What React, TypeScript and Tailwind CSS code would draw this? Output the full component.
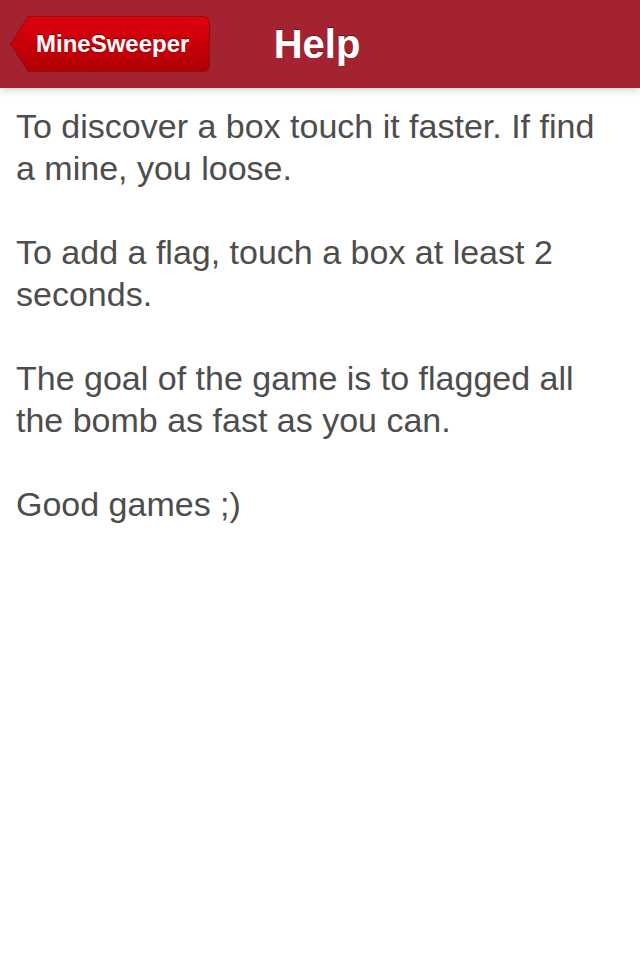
export default function App() {
  const paragraphs = [
    "To discover a box touch it faster. If find a mine, you loose.",
    "To add a flag, touch a box at least 2 seconds.",
    "The goal of the game is to flagged all the bomb as fast as you can.",
    "Good games ;)",
  ];

  return (
    <div className="min-h-screen bg-white font-['Liberation_Sans',Arial,sans-serif]">
      <header className="relative h-[88px] bg-[#a32331] grid grid-cols-[1fr_auto_1fr] items-center shadow-[0_2px_8px_rgba(0,0,0,0.18)]">
        <div className="pl-[10px]">
          <button className="relative w-[200px] h-[56px] flex items-center pl-[26px] text-white font-bold text-[24px] [text-shadow:0_-1px_0_rgba(0,0,0,0.45)]">
            <svg className="absolute inset-0" width="200" height="56" viewBox="0 0 200 56">
              <defs>
                <linearGradient id="btn" x1="0" y1="0" x2="0" y2="1">
                  <stop offset="0" stopColor="#e2000e" />
                  <stop offset="1" stopColor="#ae0004" />
                </linearGradient>
              </defs>
              <path
                d="M0.5 28 L18 0.5 H193 Q199.5 0.5 199.5 7 V49 Q199.5 55.5 193 55.5 H18 Z"
                fill="url(#btn)"
                stroke="#8a1018"
                strokeWidth="1"
              />
            </svg>
            <span className="relative">MineSweeper</span>
          </button>
        </div>
        <h1 className="text-white font-bold text-[40px] leading-none pr-[6px] [text-shadow:0_-1px_0_rgba(0,0,0,0.4)]">Help</h1>
        <div />
      </header>
      <main className="pl-4 pr-[24px] pt-[17px] text-[#4d4d4d] text-[34px] leading-[42px]">
        {paragraphs.map((p, i) => (
          <p key={i} className={i > 0 ? "mt-[42px]" : ""}>
            {p}
          </p>
        ))}
      </main>
    </div>
  );
}
